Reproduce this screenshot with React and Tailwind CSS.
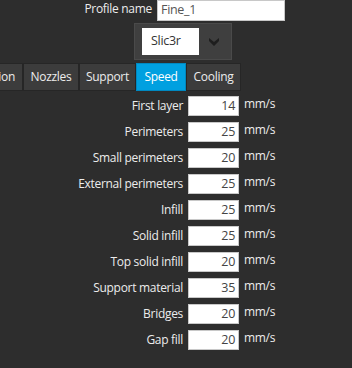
import React from 'react';

const tabs = [
  ['Extrusion', 'w-[66px]'],
  ['Nozzles', 'w-[56px]'],
  ['Support', 'w-[57px]'],
  ['Speed', 'w-[50px]'],
  ['Cooling', 'w-[55px]'],
];

const speeds = [
  ['First layer', 14],
  ['Perimeters', 25],
  ['Small perimeters', 20],
  ['External perimeters', 25],
  ['Infill', 25],
  ['Solid infill', 25],
  ['Top solid infill', 20],
  ['Support material', 35],
  ['Bridges', 20],
  ['Gap fill', 20],
];

function Chevron() {
  return (
    <svg width="10" height="8" viewBox="0 0 10 8">
      <path d="M0 0 L5 4 L10 0 L10 3 L5 8 L0 3 Z" fill="#1e1e1e" />
    </svg>
  );
}

export default function App() {
  return (
    <div className="w-[352px] h-[368px] bg-[#2d2d2d] overflow-hidden text-[12px] tracking-[-0.3px] leading-none font-['Open_Sans',sans-serif]">
      {/* profile name */}
      <div className="flex items-center h-[21px]">
        <div className="w-[152px] text-right text-[#ececec] -mt-[3px]">Profile name</div>
        <div className="ml-[5px] w-[128px] h-[21px] bg-white border border-[#c8c8c8] flex items-center pl-[3px] text-[#555] text-[12.5px]">
          Fine_1
        </div>
      </div>

      {/* slicer select */}
      <div className="mt-[2px] ml-[134px] w-[98px] h-[37px] bg-[#3f3f3f] border border-[#4a4a4a] flex items-center pl-[7px]">
        <div className="w-[57px] h-[27px] bg-white flex items-center pl-[9px] text-[#333] text-[12.5px]">Slic3r</div>
        <div className="flex-1 flex justify-center pr-[2px]">
          <Chevron />
        </div>
      </div>

      {/* tabs */}
      <div className="mt-[3px] w-[241px] h-[28px] flex justify-end overflow-hidden">
        {tabs.map(([t, w]) => (
          <div
            key={t}
            className={
              t === 'Speed'
                ? `${w} shrink-0 h-[28px] flex items-center justify-center bg-[#00a0e0] border border-[#0088c0] text-white`
                : `${w} shrink-0 h-[28px] flex items-center justify-center bg-[#3c3c3c] border border-[#262626] text-[#ececec]`
            }
          >
            {t}
          </div>
        ))}
      </div>

      {/* speed rows */}
      <div className="mt-[5px] flex flex-col gap-[6px]">
        {speeds.map(([label, v]) => (
          <div key={label} className="flex items-center h-[20px]">
            <div className="w-[183px] text-right text-[#ececec] whitespace-nowrap">{label}</div>
            <div className="ml-[5px] w-[51px] h-[20px] bg-white border border-[#c8c8c8] flex items-center justify-end pr-[3px] text-[#444] text-[12.5px]">
              {v}
            </div>
            <div className="ml-[5px] text-[#ececec] -mt-[4px]">mm/s</div>
          </div>
        ))}
      </div>
    </div>
  );
}
